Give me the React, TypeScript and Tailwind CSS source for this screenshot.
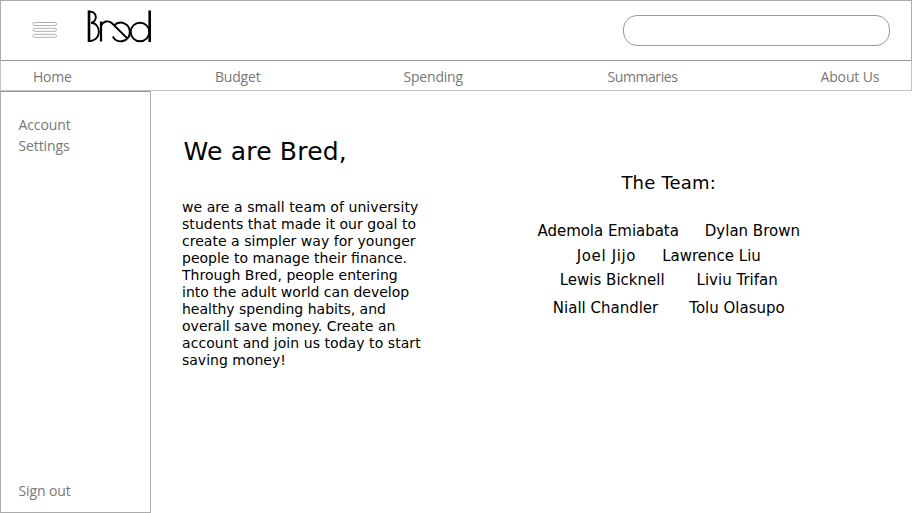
const navItems = [
  { label: "Home", cell: "w-[182px] tracking-[-0.2px]" },
  { label: "Budget", cell: "w-[188.500px] tracking-[-0.2px]" },
  { label: "Spending", cell: "w-[204px] tracking-[-0.2px]" },
  { label: "Summaries", cell: "w-[213px] tracking-[-0.42px]" },
  { label: "About Us", cell: "whitespace-nowrap tracking-[-0.15px]" },
];

const story = [
  { text: "we are a small team of university", space: "tracking-[0.06px]" },
  { text: "students that made it our goal to", space: "tracking-[0.06px]" },
  { text: "create a simpler way for younger", space: "tracking-[0.03px]" },
  { text: "people to manage their finance.", space: "tracking-[0px]" },
  { text: "Through Bred, people entering", space: "tracking-[0.03px]" },
  { text: "into the adult world can develop", space: "tracking-[0px]" },
  { text: "healthy spending habits, and", space: "tracking-[0px]" },
  { text: "overall save money. Create an", space: "tracking-[0.03px]" },
  { text: "account and join us today to start", space: "tracking-[0.06px]" },
  { text: "saving money!", space: "tracking-[0px]" },
];

const team = [
  { names: ["Ademola Emiabata", "Dylan Brown"], row: "h-[25px] gap-[26px]", space: "tracking-[-0.04px]" },
  { names: ["Joel Jijo", "Lawrence Liu"], row: "h-[24px] gap-[26px]", space: "tracking-[0.65px]" },
  { names: ["Lewis Bicknell", "Liviu Trifan"], row: "h-[28px] gap-[32px]", space: "" },
  { names: ["Niall Chandler", "Tolu Olasupo"], row: "h-[24px] gap-[31px]", space: "" },
];

function MenuIcon() {
  return (
    <svg width="26" height="18" viewBox="0 0 26 18" fill="#fff" stroke="#a8a8a8" strokeWidth="0.9">
      <rect x="1" y="1.5" width="23.5" height="3" rx="1.5" />
      <rect x="1" y="7.3" width="23.5" height="3" rx="1.5" />
      <rect x="1" y="13.3" width="23.5" height="3" rx="1.5" />
    </svg>
  );
}

function Logo() {
  return (
    <svg width="68" height="36" viewBox="85 8 68 36" fill="none" stroke="#000" strokeWidth="1.9">
      <path d="M89 10.5V42" strokeWidth="2.6" />
      <path d="M89 11.800H90.500C97.500 12 97.500 22 91 22.800C101.500 23 102 41 89.500 41" />
      <path d="M101 21.500V41.500" strokeWidth="2.200" />
      <path d="M101 26C103 21 108.500 20 112 23.300L127 38.200" />
      <path d="M114 25.500C120 19.500 129.800 23.500 129.800 32C129.800 41.500 117 45 112.800 36.500" />
      <circle cx="140" cy="32" r="9.300" />
      <path d="M149.700 10.500V42" strokeWidth="2.600" />
    </svg>
  );
}

export default function App() {
  return (
    <div className="flex h-[513px] w-[912px] flex-col overflow-hidden bg-white font-['DejaVu_Sans',sans-serif] text-black">
      <header className="flex h-[60px] shrink-0 items-start border-x border-t border-[#ababab]">
        <div className="ml-[31px] mt-[20px]"><MenuIcon /></div>
        <div className="ml-[27px] mt-[7px]"><Logo /></div>
        <div className="ml-auto mr-[21px] mt-[14px] h-[31px] w-[267px] rounded-[14px] border border-[#999]" />
      </header>
      <nav className="flex h-[31px] shrink-0 items-center border-x border-t border-b border-[#c4c4c4] border-t-[#999] pl-[32px] pt-px font-['Open_Sans',sans-serif] text-[14px] text-[#777]">
        {navItems.map((item) => (
          <span key={item.label} className={item.cell}>{item.label}</span>
        ))}
      </nav>
      <div className="flex min-h-0 flex-1">
        <aside className="flex w-[151px] shrink-0 flex-col border border-[#ababab] border-t-[#999] pl-[17.500px] font-['Open_Sans',sans-serif] text-[14px] leading-[21px] tracking-[-0.1px] text-[#777]">
          <span className="mt-[22px]">Account</span>
          <span>Settings</span>
          <span className="mb-[11px] mt-auto">Sign out</span>
        </aside>
        <section className="ml-[31px] w-[260px] shrink-0">
          <h1 className="mt-[44px] whitespace-nowrap pl-[1.500px] text-[25px] leading-[34px] tracking-[0.2px]">We are Bred,</h1>
          <div className="mt-[30px] text-[14px] leading-[17px]">
            {story.map((line) => (
              <div key={line.text} className={`whitespace-nowrap ${line.space}`}>{line.text}</div>
            ))}
          </div>
        </section>
        <section className="ml-[77px] w-[299.500px] text-center">
          <h2 className="mt-[79px] text-[18px] leading-[26px] tracking-[0.2px]">The Team:</h2>
          <div className="mt-[23px] text-[15px] leading-[24px]">
            {team.map((r) => (
              <div key={r.names[0]} className={`flex justify-center whitespace-nowrap ${r.row}`}>
                <span className={r.space}>{r.names[0]}</span>
                <span>{r.names[1]}</span>
              </div>
            ))}
          </div>
        </section>
      </div>
    </div>
  );
}
